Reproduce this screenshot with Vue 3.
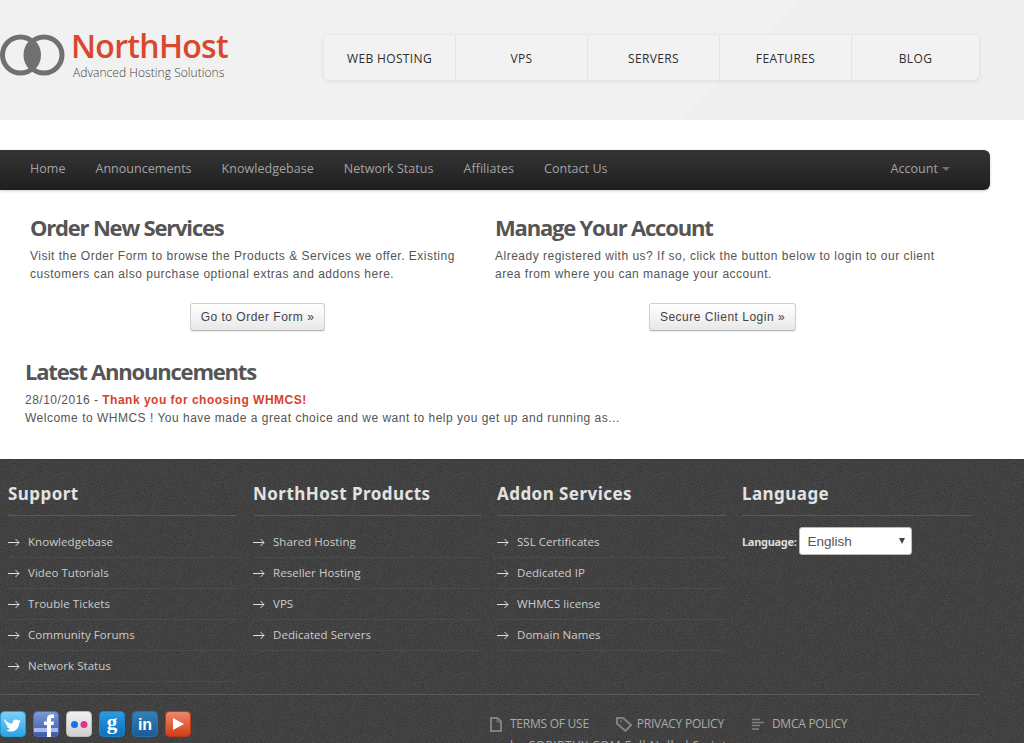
<script setup>
const topNav = ['WEB HOSTING', 'VPS', 'SERVERS', 'FEATURES', 'BLOG']
const menu = ['Home', 'Announcements', 'Knowledgebase', 'Network Status', 'Affiliates', 'Contact Us']
const columns = [
  { title: 'Support', links: ['Knowledgebase', 'Video Tutorials', 'Trouble Tickets', 'Community Forums', 'Network Status'] },
  { title: 'NorthHost Products', links: ['Shared Hosting', 'Reseller Hosting', 'VPS', 'Dedicated Servers'] },
  { title: 'Addon Services', links: ['SSL Certificates', 'Dedicated IP', 'WHMCS license', 'Domain Names'] }
]
</script>

<template>
  <div class="page">
    <header class="top">
      <div class="logo">
        <svg class="rings" width="65" height="42" viewBox="0 0 65 42">
          <path d="M32.2 7.5a19 19 0 0 1 0 27a19 19 0 0 1 0-27z" fill="#707070" />
          <circle cx="20.5" cy="21" r="18" fill="none" stroke="#707070" stroke-width="5" />
          <circle cx="44" cy="21" r="18" fill="none" stroke="#707070" stroke-width="5" />
        </svg>
        <div class="brand">
          <div class="brand-name">NorthHost</div>
          <div class="brand-sub">Advanced Hosting Solutions</div>
        </div>
      </div>
      <nav class="topnav">
        <a v-for="item in topNav" :key="item">{{ item }}</a>
      </nav>
    </header>

    <nav class="menubar">
      <a v-for="item in menu" :key="item">{{ item }}</a>
      <a class="account">Account<i class="caret"></i></a>
    </nav>

    <main class="content">
      <div class="cols">
        <section>
          <h2>Order New Services</h2>
          <p>Visit the Order Form to browse the Products &amp; Services we offer. Existing customers can also purchase optional extras and addons here.</p>
          <div class="btn-row"><button>Go to Order Form »</button></div>
        </section>
        <section>
          <h2>Manage Your Account</h2>
          <p>Already registered with us? If so, click the button below to login to our client area from where you can manage your account.</p>
          <div class="btn-row"><button>Secure Client Login »</button></div>
        </section>
      </div>
      <section class="news">
        <h2>Latest Announcements</h2>
        <p>28/10/2016 - <b>Thank you for choosing WHMCS!</b></p>
        <p>Welcome to WHMCS ! You have made a great choice and we want to help you get up and running as...</p>
      </section>
    </main>

    <footer class="footer">
      <div class="fcols">
        <div v-for="col in columns" :key="col.title" class="fcol">
          <h3>{{ col.title }}</h3>
          <ul>
            <li v-for="link in col.links" :key="link">
              <svg width="12" height="9" viewBox="0 0 12 9"><path d="M0 4.5h11M7.5 1l3.5 3.5L7.5 8" fill="none" stroke="#ddd" stroke-width="1" /></svg>
              <span>{{ link }}</span>
            </li>
          </ul>
        </div>
        <div class="fcol">
          <h3>Language</h3>
          <div class="lang">
            <label>Language:</label>
            <div class="select">English<i></i></div>
          </div>
        </div>
      </div>
      <div class="fbottom">
        <div class="social">
          <svg width="26" height="26" viewBox="0 0 26 26">
            <defs>
              <linearGradient id="tw" x1="0" y1="0" x2="0" y2="1"><stop offset="0" stop-color="#7fd0f5" /><stop offset="1" stop-color="#27a5e6" /></linearGradient>
              <linearGradient id="fb" x1="0" y1="0" x2="0" y2="1"><stop offset="0" stop-color="#7d9ad8" /><stop offset="1" stop-color="#3c5aa8" /></linearGradient>
              <linearGradient id="fl" x1="0" y1="0" x2="0" y2="1"><stop offset="0" stop-color="#f2f2f2" /><stop offset="1" stop-color="#cfcfcf" /></linearGradient>
              <linearGradient id="go" x1="0" y1="0" x2="0" y2="1"><stop offset="0" stop-color="#2c9be0" /><stop offset="1" stop-color="#0b6fc0" /></linearGradient>
              <linearGradient id="li" x1="0" y1="0" x2="0" y2="1"><stop offset="0" stop-color="#2f82bd" /><stop offset="1" stop-color="#1c5a96" /></linearGradient>
              <linearGradient id="yt" x1="0" y1="0" x2="0" y2="1"><stop offset="0" stop-color="#ee8a6a" /><stop offset="1" stop-color="#d13c17" /></linearGradient>
            </defs>
            <rect x=".5" y=".5" width="25" height="25" rx="4" fill="url(#tw)" stroke="#2b9ad8" />
            <path d="M4 8c2.800 3 5.500 4.500 8.500 4.700-.5-2.800 2-4.900 4.300-4 1 .4 1.400.8 1.400.8l2.300-.9-1.300 1.900 1.800-.3-1.800 1.900c0 5.400-4.500 9-9 8.500-2.700-.2-4.500-1.400-4.500-1.400 2.200 0 3.600-.6 4.500-1.500-1.800 0-3-.9-3.600-2.500h1.800c-1.800-.6-2.900-2-2.900-3.600l1.800.4C4.400 11 3.800 9.600 4 8z" fill="#fff" />
          </svg>
          <svg width="26" height="26" viewBox="0 0 26 26">
            <rect x=".5" y=".5" width="25" height="25" rx="4" fill="url(#fb)" stroke="#4a6ab5" />
            <rect x="1" y="17" width="24" height="4" fill="#a9bbe6" />
            <path d="M14 26V14h-3v-3.500h3V8c0-3 1.500-4.500 4.500-4.500H21V7h-1.500C18 7 18 7.700 18 8.500v2h3l-.5 3.500H18v12z" fill="#fff" />
          </svg>
          <svg width="26" height="26" viewBox="0 0 26 26">
            <rect x=".5" y=".5" width="25" height="25" rx="4" fill="url(#fl)" stroke="#bbb" />
            <circle cx="8.500" cy="13.500" r="3.500" fill="#1c6fe0" />
            <circle cx="18" cy="13.500" r="3.500" fill="#e8308a" />
          </svg>
          <svg width="26" height="26" viewBox="0 0 26 26">
            <rect x=".5" y=".5" width="25" height="25" rx="4" fill="url(#go)" stroke="#1684d4" />
            <text x="13" y="18" text-anchor="middle" class="g">g</text>
          </svg>
          <svg width="26" height="26" viewBox="0 0 26 26">
            <rect x=".5" y=".5" width="25" height="25" rx="4" fill="url(#li)" stroke="#2a6ea8" />
            <text x="13" y="19" text-anchor="middle" class="in">in</text>
          </svg>
          <svg width="26" height="26" viewBox="0 0 26 26">
            <rect x=".5" y=".5" width="25" height="25" rx="4" fill="url(#yt)" stroke="#b93a18" />
            <path d="M8 7L19 13 8 19z" fill="#fff" />
          </svg>
        </div>
        <div class="legal">
          <div class="legal-row">
            <a>
              <svg width="12" height="15" viewBox="0 0 12 15"><path d="M1 1h6.500L11 4.500V14H1z" fill="none" stroke="#808080" stroke-width="2" /><path d="M7 1v4h4" fill="none" stroke="#808080" stroke-width="1" /></svg>
              TERMS OF USE
            </a>
            <a>
              <svg width="16" height="15" viewBox="0 0 16 15"><path d="M1 1h6l8 7-5.500 6L1 6.500z" fill="none" stroke="#808080" stroke-width="2" /><circle cx="5" cy="4.500" r="1" fill="#808080" /></svg>
              PRIVACY POLICY
            </a>
            <a>
              <svg width="13" height="13" viewBox="0 0 13 13"><path d="M1 1.500h8M1 4.500h12M1 7.500h8M1 11h7" stroke="#808080" stroke-width="1.500" /></svg>
              DMCA POLICY
            </a>
          </div>
          <div class="credit">by COPIRTHY.COM Full Nulled Script</div>
        </div>
      </div>
    </footer>
  </div>
</template>

<style scoped>
.page {
  width: 1024px;
  height: 743px;
  overflow: hidden;
  background: #fff;
  font-family: "Liberation Sans", Arial, sans-serif;
}
.top {
  height: 120px;
  display: flex;
  box-sizing: border-box;
  background: repeating-linear-gradient(135deg, #ebebeb 0 1.1px, #f3f3f3 1.1px 2.83px);
}
.logo {
  width: 324px;
  display: flex;
  align-items: flex-start;
  padding-top: 29px;
  box-sizing: border-box;
}
.rings { margin-top: 5px; margin-right: 7px; flex: none; }
.brand-name {
  color: #d9472f;
  font: 600 32px/34px "Open Sans", sans-serif;
  letter-spacing: -0.7px;
  margin-left: -1px;
}
.brand-sub {
  color: #444;
  font: 300 12px/16px "Open Sans", sans-serif;
  letter-spacing: 0.05px;
  margin: 2px 0 0 1px;
}
.topnav {
  margin-top: 35px;
  width: 655px;
  height: 45px;
  display: flex;
  border-radius: 5px;
  background: #f2f2f2;
  box-shadow: 0 1px 5px rgba(0, 0, 0, 0.09);
}
.topnav a {
  width: 132px;
  border-right: 1px solid #e6e6e6;
  box-sizing: border-box;
  text-align: center;
  font: 400 12px/47px "Open Sans", sans-serif;
  letter-spacing: 0.35px;
  color: #2e2e2e;
}
.topnav a:last-child { border-right: 0; width: 127px; }
.menubar {
  margin-top: 30px;
  width: 990px;
  height: 40px;
  display: flex;
  padding-left: 15px;
  box-sizing: border-box;
  border-radius: 0 6px 6px 0;
  background: linear-gradient(#343434, #1f1f1f);
  box-shadow: 0 1px 3px rgba(0, 0, 0, 0.2);
}
.menubar a {
  padding: 0 15px;
  font: 400 12.500px/38px "Open Sans", sans-serif;
  letter-spacing: 0.03px;
  color: #a3a3a3;
}
.menubar .account { margin-left: auto; padding-right: 40px; }
.caret {
  display: inline-block;
  margin-left: 4px;
  vertical-align: 2px;
  border: 4px solid transparent;
  border-top-color: #6f6f6f;
  border-bottom: 0;
}
.content { color: #555; font-size: 12px; letter-spacing: 0.5px; }
.cols {
  display: grid;
  grid-template-columns: 455px 455px;
  column-gap: 10px;
  padding: 20px 0 0 30px;
}
h2 {
  margin: 0;
  font: 700 22px/34px "Open Sans", sans-serif;
  letter-spacing: -1.2px;
  color: #555;
}
.cols p { margin: 0; width: 440px; line-height: 18px; font-size: 12px; color: #555; }
.cols h2 { margin-bottom: 3px; }
.btn-row { text-align: center; margin-top: 20px; }
button {
  height: 28px;
  padding: 0 10px;
  border: 1px solid #cfcfcf;
  border-bottom-color: #b5b5b5;
  border-radius: 3px;
  background: linear-gradient(#fff, #e8e8e8);
  color: #444;
  font: 12px "Liberation Sans", Arial, sans-serif;
  letter-spacing: 0.5px;
  box-shadow: 0 1px 1px rgba(0, 0, 0, 0.08);
}
.news { padding: 23px 0 0 25px; }
.news h2 { margin-bottom: 3px; }
.news p { margin: 0; line-height: 18px; }
.news b { color: #d9402c; }
.footer {
  margin-top: 32px;
  height: 284px;
  overflow: hidden;
  border-top: 1px solid #3a3a3a;
  background-color: #4a4a4a;
  background-image: url("data:image/svg+xml,%3Csvg xmlns='http://www.w3.org/2000/svg' width='200' height='200'%3E%3Cfilter id='n'%3E%3CfeTurbulence type='fractalNoise' baseFrequency='1.1' numOctaves='2' stitchTiles='stitch'/%3E%3CfeColorMatrix values='0 0 0 0 0 0 0 0 0 0 0 0 0 0 0 0 0 0 0.5 -0.13'/%3E%3C/filter%3E%3Crect width='200' height='200' filter='url(%23n)'/%3E%3C/svg%3E");
}
.fcols {
  display: grid;
  grid-template-columns: 229px 228px 229px 230px;
  column-gap: 16px;
  padding: 0 0 0 8px;
}
h3 {
  margin: 0;
  height: 56px;
  box-sizing: border-box;
  border-bottom: 1px solid #5a5a5a;
  padding-top: 21px;
  font: 700 17px/25px "Noto Sans", sans-serif;
  letter-spacing: 0.45px;
  color: #e2e2e2;
}
ul { list-style: none; margin: 11px 0 0; padding: 0; }
li {
  height: 31px;
  box-sizing: border-box;
  display: flex;
  align-items: center;
  gap: 8px;
  border-bottom: 1px solid #4b4b4b;
  font: 400 11.500px/30px "Open Sans", sans-serif;
  letter-spacing: 0.05px;
  color: #ccc;
}
li svg { flex: none; }
.lang { display: flex; align-items: center; gap: 2px; margin-top: 11px; }
.lang label {
  font: 700 11px/1 "Noto Sans", sans-serif;
  letter-spacing: -0.3px;
  color: #ddd;
}
.select {
  position: relative;
  width: 113px;
  height: 28px;
  box-sizing: border-box;
  padding-left: 8px;
  border: 1px solid #bbb;
  border-radius: 3px;
  background: #fff;
  color: #555;
  font: 13.500px/27px "Liberation Sans", Arial, sans-serif;
}
.select i {
  position: absolute;
  right: 6px;
  top: 10px;
  border: 3.500px solid transparent;
  border-top: 6px solid #444;
  border-bottom: 0;
}
.fbottom {
  display: flex;
  width: 980px;
  margin-top: 12px;
  border-top: 1px solid #5a5a5a;
  padding-top: 16px;
  box-sizing: border-box;
}
.social { display: flex; gap: 7px; width: 490px; flex: none; }
.social svg { flex: none; }
.g { font: 700 21px "Liberation Serif", serif; fill: #fff; }
.in { font: 700 16px "Liberation Sans", sans-serif; fill: #fff; }
.legal-row { display: flex; height: 26px; align-items: center; }
.legal-row a {
  display: flex;
  align-items: center;
  gap: 8px;
  margin-right: 27px;
  font: 400 12px/1 "Open Sans", sans-serif;
  letter-spacing: -0.25px;
  color: #aaa;
}
.legal-row a:nth-child(2) { gap: 5px; }
.credit {
  margin: 1px 0 0 20px;
  font: 400 12px/16px "Open Sans", sans-serif;
  letter-spacing: 0.45px;
  color: #aaa;
}
</style>
<style>
html, body { margin: 0; overflow: hidden; }
</style>
